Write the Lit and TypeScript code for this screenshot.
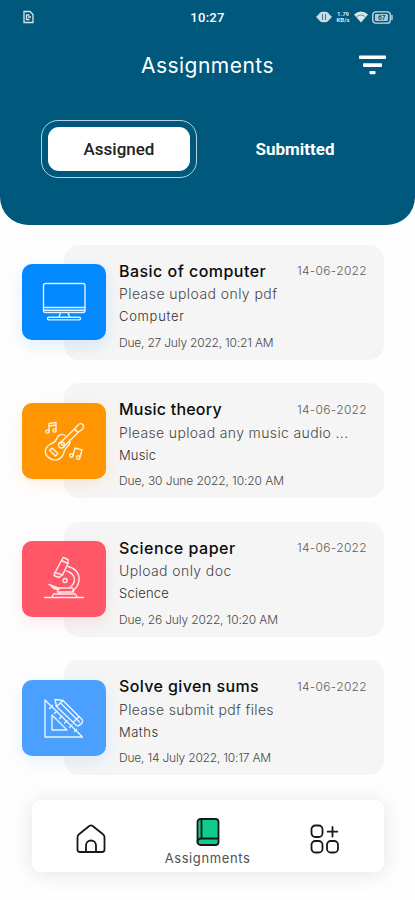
import { LitElement, html, css, svg, TemplateResult } from "lit";
import { customElement, property } from "lit/decorators.js";
import { styleMap } from "lit/directives/style-map.js";

interface Assignment {
  title: string;
  note: string;
  subject: string;
  due: string;
  date: string;
  color: string;
  icon: TemplateResult;
  // letter spacing of title, note, subject and due line
  spacing: [number, number, number, number];
}

const computer = svg`
  <rect x="2.500" y="4.500" width="41.500" height="29" rx="2"/>
  <path d="M2.500 28.500h41.500M19.500 33.500l-1.500 4.500M27 33.500l1.500 4.500M3 31.200h40.500"/>
  <rect x="6.500" y="38.300" width="33" height="2.600" rx="1.300"/>`;

const guitar = svg`
  <path d="M24 17.500c-3-2.500-7.500-.5-8.500 3.500-.7 3-3 3.500-6 5-6 3.500-6.500 9-3 12.500 4 4.500 11 4.500 14.500 0 2.500-3 1.500-6 4.500-9 3-2.500 4.500-4.500 3-7.500"/>
  <path d="M19 25l14.500-14 3.500 3.500L23 28.500z"/>
  <path d="M33.500 11l3.500-4c3-3.500 7.500.5 4.500 4L37 14.500z"/>
  <circle cx="20.500" cy="27" r="3"/>
  <path d="M11 30l6 5.500-2.500 2.500-6-5.500z"/>
  <path d="M8 13V5.500l7-1V12M8 8l7-1"/>
  <circle cx="6.500" cy="13.500" r="1.600"/><circle cx="13.500" cy="12.500" r="1.600"/>
  <path d="M32 37.500l2-7.500 7 2-2 7"/>
  <circle cx="30.300" cy="37.500" r="1.700"/><circle cx="37.200" cy="39.500" r="1.700"/>`;

const microscope = svg`
  <path d="M14 16.500l6.500-12 6.500 3-5.500 11.500z"/>
  <path d="M20.500 4.500l1.700-3 4.800 2v4M14 16.500l-1 3 5 2 3.500-2.500"/>
  <path d="M27 10.500c7 1.500 12 7 11 14-.6 4.500-3 8-6.500 10.500M25.500 15c5 1 8.500 5 8 9.500-.5 3-2 5-4.500 7"/>
  <circle cx="24" cy="24.500" r="2"/>
  <path d="M8 28.500l9 3.500h14.500M10 29.500c2 3 5 4 8 4M16.500 33v3h16v-3M19 36v2"/>
  <path d="M11 41l1.500-3h22l1.500 3M3.500 41.500h39"/>`;

const rulers = svg`
  <path d="M4 5v37h37.500z"/>
  <path d="M11 20v15h15z"/>
  <path d="M8.500 13.500l3-3M13.500 18.500l2.500-2.500M18.500 23.500l2.500-2.500M23.500 28l2.500-2.500M28.500 32.500l2.500-2.500M33.500 36.500l2-2"/>
  <path d="M14 4.500l8 1 19 19c2.500 2.500-3.500 8-6 5.500L15.500 11.500z"/>
  <path d="M22 5.500l-6.500 6M20 8.500l18.500 18.500M38 21.500l-6 6"/>`;

const assignments: Assignment[] = [
  { title: "Basic of computer", note: "Please upload only pdf", subject: "Computer", due: "Due, 27 July 2022, 10:21 AM", date: "14-06-2022", color: "#0288ff", icon: computer, spacing: [0.47, 0.43, 0.7, -0.2] },
  { title: "Music theory", note: "Please upload any music audio ...", subject: "Music", due: "Due, 30 June 2022, 10:20 AM", date: "14-06-2022", color: "#ff9502", icon: guitar, spacing: [0.22, 0.36, 0.15, -0.1] },
  { title: "Science paper", note: "Upload only doc", subject: "Science", due: "Due, 26 July 2022, 10:20 AM", date: "14-06-2022", color: "#ff5767", icon: microscope, spacing: [0.5, 0.4, 0.22, -0.15] },
  { title: "Solve given sums", note: "Please submit pdf files", subject: "Maths", due: "Due, 14 July 2022, 10:17 AM", date: "14-06-2022", color: "#4ba0ff", icon: rulers, spacing: [0.38, 0.34, 0.5, -0.2] },
];

@customElement("assignment-card")
class AssignmentCard extends LitElement {
  @property({ attribute: false }) item!: Assignment;

  static styles = css`
    :host { display: block; height: 115px; }
    .row { display: grid; grid-template-columns: 42px 42px 1fr; grid-template-rows: 115px; margin: 0 31px 0 22px; }
    .panel { grid-area: 1 / 2 / 2 / 4; background: #f5f5f5; border-radius: 15px; }
    .tile { grid-area: 1 / 1 / 2 / 3; align-self: center; height: 76px; border-radius: 10px; display: grid; place-items: center; position: relative; }
    .tile svg { width: 46px; height: 46px; fill: none; stroke: #fff; stroke-width: 1.4; stroke-linecap: round; stroke-linejoin: round; opacity: 0.88; }
    .text { grid-area: 1 / 3 / 2 / 4; padding: 14px 17px 0 13px; display: flex; flex-direction: column; color: #484848; white-space: nowrap; }
    .head { display: flex; justify-content: space-between; align-items: center; height: 24.5px; }
    .title { font-size: 16px; font-weight: 500; color: #0c0c0c; }
    .date { font-size: 12px; font-weight: 300; color: #5c5c5c; letter-spacing: 0.32px; }
    .note { font-size: 14px; font-weight: 300; line-height: 22px; }
    .subject { font-size: 13px; font-weight: 300; line-height: 22px; color: #303030; }
    .due { font-size: 12px; font-weight: 300; line-height: 22px; margin-top: 4.5px; }
  `;

  render() {
    const a = this.item;
    const ls = (n: number) => styleMap({ letterSpacing: `${a.spacing[n]}px` });
    return html`<div class="row">
      <div class="panel"></div>
      <div class="tile" style=${styleMap({ background: a.color, boxShadow: `0 6px 18px ${a.color}22` })}>
        <svg viewBox="0 0 46 46">${a.icon}</svg>
      </div>
      <div class="text">
        <div class="head"><span class="title" style=${ls(0)}>${a.title}</span><span class="date">${a.date}</span></div>
        <div class="note"><span style=${ls(1)}>${a.note}</span></div>
        <div class="subject"><span style=${ls(2)}>${a.subject}</span></div>
        <div class="due"><span style=${ls(3)}>${a.due}</span></div>
      </div>
    </div>`;
  }
}

@customElement("app-root")
class AppRoot extends LitElement {
  static styles = css`
    :host { display: flex; flex-direction: column; width: 100%; height: 900px; overflow: hidden; background: #fefefe; font-family: Inter, sans-serif; }
    .header { height: 225px; flex: none; background: #00587d; border-radius: 0 0 28px 28px; color: #fff; display: flex; flex-direction: column; }
    .status { height: 34px; display: grid; grid-template-columns: 1fr auto 1fr; align-items: center; padding: 0 22px; font: 500 13px Roboto, sans-serif; }
    .status svg { display: block; }
    .time { letter-spacing: 0.3px; }
    .right { display: flex; justify-content: flex-end; align-items: center; gap: 4px; }
    .speed { display: flex; flex-direction: column; font-size: 6px; line-height: 6px; font-weight: 700; align-items: center; width: 14px; color: #d9e8ed; }
    .bar { height: 62px; display: grid; grid-template-columns: 1fr auto 1fr; align-items: center; padding: 0 29px; }
    .bar h1 { grid-column: 2; margin: 0; font-size: 21px; font-weight: 400; letter-spacing: 0.48px; }
    .bar svg { justify-self: end; }
    .tabs { display: grid; grid-template-columns: 156px 156px; gap: 20px; margin: 24px 0 0 41px; font: 500 17px Roboto, sans-serif; }
    .tab { box-sizing: border-box; height: 58px; display: grid; }
    .tab span { display: grid; place-items: center; }
    .tab.on { border: 1.5px solid #b9d3de; border-radius: 17px; padding: 6px; }
    .tab.on span { background: #fff; color: #222; border-radius: 11px; }
    .tab.off { font-weight: 700; }
    .list { display: flex; flex-direction: column; gap: 23.500px; padding-top: 19.5px; }
    .nav { flex: none; height: 72px; margin: 25px 31px 0 32px; background: #fff; border-radius: 9px; box-shadow: 0 2px 22px rgba(0,0,0,.11); display: grid; grid-template-columns: repeat(3, 117px); position: relative; }
    .nav svg { fill: none; stroke: #181818; stroke-width: 1.8; stroke-linejoin: round; stroke-linecap: round; }
    .item { display: flex; flex-direction: column; align-items: center; justify-content: center; padding-top: 6px; }
    .item.current { padding-top: 12px; }
    .label { font-size: 13px; line-height: 18px; color: #505050; margin-top: 3px; letter-spacing: 0.6px; }
  `;

  render() {
    return html`
      <div class="header">
        <div class="status">
          <svg width="14" height="14" viewBox="0 0 14 14" fill="none" stroke="#d4e4ea" stroke-width="1.3"><path d="M2 1.500h6l3 3v8H2z"/><path d="M7.500 5H4.500v4.500h3M6 7h3"/></svg>
          <span class="time">10:27</span>
          <div class="right">
            <svg width="16" height="12" viewBox="0 0 16 12"><path d="M0 6l4-4v8zM16 6l-4-4v8z" fill="#c9dde5"/><rect x="3.500" y=".7" width="9" height="10.600" rx="3" fill="#c9dde5"/><path d="M6.500 3v6M9.500 3v6" stroke="#39789a" stroke-width="1"/></svg>
            <div class="speed"><span>1.79</span><span>KB/s</span></div>
            <svg width="14" height="12" viewBox="0 0 14 12"><path d="M0 3.500Q7-2.500 14 3.500L7 11.500z" fill="#d9e8ed"/><path d="M2.700 5.700Q7 2.300 11.300 5.700" fill="none" stroke="#39789a" stroke-width=".8"/></svg>
            <svg width="21" height="13" viewBox="0 0 21 13"><rect x=".8" y=".8" width="17.500" height="11.400" rx="3" fill="none" stroke="#c9dde5" stroke-width="1.300"/><rect x="3" y="3" width="13" height="7" rx="1" fill="#aac8d5"/><path d="M20 4v5" stroke="#c9dde5" stroke-width="1.300"/><text x="6" y="9" font-size="6.500" font-weight="700" fill="#00587d">67</text></svg>
          </div>
        </div>
        <div class="bar">
          <h1>Assignments</h1>
          <svg width="27" height="20" viewBox="0 0 27 20" fill="#fff"><rect y=".5" width="27" height="3.600" rx=".8"/><rect x="4" y="8.300" width="19" height="3.600" rx=".8"/><rect x="10.500" y="16" width="6" height="3.300" rx=".8"/></svg>
        </div>
        <div class="tabs">
          <div class="tab on"><span>Assigned</span></div>
          <div class="tab off"><span>Submitted</span></div>
        </div>
      </div>
      <div class="list">${assignments.map((a) => html`<assignment-card .item=${a}></assignment-card>`)}</div>
      <div class="nav">
        <div class="item"><svg width="30" height="30" viewBox="0 0 30 30"><path d="M4 28q-2.500 0-2.500-2.500V13.500q0-2 1.500-3.200L13 2.200q2-1.500 4 0l10 8.100q1.500 1.200 1.500 3.200v12q0 2.500-2.500 2.500z"/><path d="M10 28v-6.500a5 5 0 0 1 10 0V28"/></svg></div>
        <div class="item current">
          <svg width="24" height="28" viewBox="0 0 24 28"><rect x="1.500" y="1" width="21" height="26" rx="3" fill="#0fcb8d"/><path d="M5.500 2v18M22 20.500H5.500q-4 0-4 3.500"/></svg>
          <span class="label">Assignments</span>
        </div>
        <div class="item"><svg width="30" height="30" viewBox="0 0 30 30"><rect x="1.500" y="1.500" width="11" height="11.500" rx="3.800"/><rect x="1.500" y="17" width="11" height="11.500" rx="3.800"/><rect x="17" y="17" width="11" height="11.500" rx="3.800"/><path d="M22.500 3v9.500M17.700 7.700h9.600"/></svg></div>
      </div>`;
  }
}
